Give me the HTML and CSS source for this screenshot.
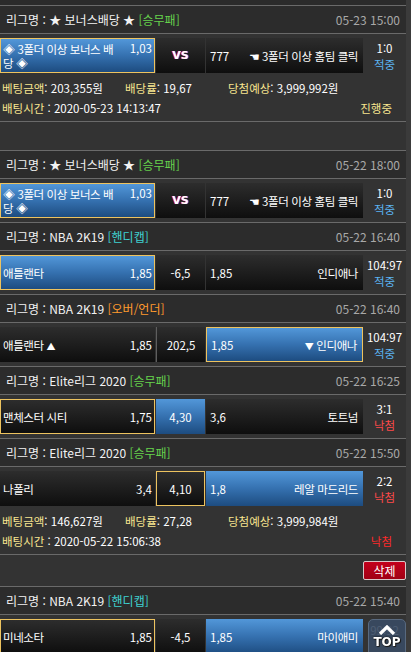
FILE: index.html
```html
<!DOCTYPE html>
<html lang="ko">
<head>
<meta charset="utf-8">
<title>베팅내역</title>
<link rel="stylesheet" href="styles.css">
</head>
<body>
<div class="page">
  <div class="cap"></div>

  <section class="ticket">
    <div class="league">
      <span class="lg">리그명 : ★ 보너스배당 ★ <span class="tp green">[승무패]</span></span>
      <span class="date">05-23 15:00</span>
    </div>
    <div class="match">
      <div class="box home blue sel bonus"><span class="nm">◈ 3폴더 이상 보너스 배당 ◈</span><span class="od">1,03</span></div>
      <div class="box mid dark"><span class="vs">VS</span></div>
      <div class="box away dark"><span class="od">777</span><span class="nm"><span class="hand">☚</span> 3폴더 이상 홈팀 클릭</span></div>
      <div class="res"><span>1:0</span><span class="hit">적중</span></div>
    </div>
    <div class="info">
      <div class="c1"><span class="lb">베팅금액</span>: 203,355원</div>
      <div class="c2"><span class="lb">배당률</span>: 19,67</div>
      <div class="c3"><span class="lb">당첨예상</span>: 3,999,992원</div>
      <div class="row2"><span><span class="lb">배팅시간</span> : 2020-05-23 14:13:47</span><span class="st ing">진행중</span></div>
    </div>
    <div class="actions"></div>
  </section>

  <section class="ticket">
    <div class="league">
      <span class="lg">리그명 : ★ 보너스배당 ★ <span class="tp green">[승무패]</span></span>
      <span class="date">05-22 18:00</span>
    </div>
    <div class="match">
      <div class="box home blue sel bonus"><span class="nm">◈ 3폴더 이상 보너스 배당 ◈</span><span class="od">1,03</span></div>
      <div class="box mid dark"><span class="vs">VS</span></div>
      <div class="box away dark"><span class="od">777</span><span class="nm"><span class="hand">☚</span> 3폴더 이상 홈팀 클릭</span></div>
      <div class="res"><span>1:0</span><span class="hit">적중</span></div>
    </div>

    <div class="league">
      <span class="lg">리그명 : NBA 2K19 <span class="tp cyan">[핸디캡]</span></span>
      <span class="date">05-22 16:40</span>
    </div>
    <div class="match">
      <div class="box home blue sel"><span class="nm">애틀랜타</span><span class="od">1,85</span></div>
      <div class="box mid dark">-6,5</div>
      <div class="box away dark"><span class="od">1,85</span><span class="nm">인디애나</span></div>
      <div class="res"><span>104:97</span><span class="hit">적중</span></div>
    </div>

    <div class="league">
      <span class="lg">리그명 : NBA 2K19 <span class="tp orange">[오버/언더]</span></span>
      <span class="date">05-22 16:40</span>
    </div>
    <div class="match">
      <div class="box home dark"><span class="nm">애틀랜타 <span class="tri">▲</span></span><span class="od">1,85</span></div>
      <div class="box mid dark split">202,5</div>
      <div class="box away blue sel"><span class="od">1,85</span><span class="nm"><span class="tri">▼</span> 인디애나</span></div>
      <div class="res"><span>104:97</span><span class="hit">적중</span></div>
    </div>

    <div class="league">
      <span class="lg">리그명 : Elite리그 2020 <span class="tp green">[승무패]</span></span>
      <span class="date">05-22 16:25</span>
    </div>
    <div class="match">
      <div class="box home dark sel"><span class="nm">맨체스터 시티</span><span class="od">1,75</span></div>
      <div class="box mid blue">4,30</div>
      <div class="box away dark"><span class="od">3,6</span><span class="nm">토트넘</span></div>
      <div class="res"><span>3:1</span><span class="miss">낙첨</span></div>
    </div>

    <div class="league">
      <span class="lg">리그명 : Elite리그 2020 <span class="tp green">[승무패]</span></span>
      <span class="date">05-22 15:50</span>
    </div>
    <div class="match">
      <div class="box home dark"><span class="nm">나폴리</span><span class="od">3,4</span></div>
      <div class="box mid dark sel">4,10</div>
      <div class="box away blue"><span class="od">1,8</span><span class="nm">레알 마드리드</span></div>
      <div class="res"><span>2:2</span><span class="miss">낙첨</span></div>
    </div>
    <div class="info">
      <div class="c1"><span class="lb">베팅금액</span>: 146,627원</div>
      <div class="c2"><span class="lb">배당률</span>: 27,28</div>
      <div class="c3"><span class="lb">당첨예상</span>: 3,999,984원</div>
      <div class="row2"><span><span class="lb">배팅시간</span> : 2020-05-22 15:06:38</span><span class="st lost">낙첨</span></div>
    </div>
    <div class="actions"><button class="del" type="button">삭제</button></div>
  </section>

  <section class="ticket">
    <div class="league">
      <span class="lg">리그명 : NBA 2K19 <span class="tp cyan">[핸디캡]</span></span>
      <span class="date">05-22 15:40</span>
    </div>
    <div class="match">
      <div class="box home dark sel"><span class="nm">미네소타</span><span class="od">1,85</span></div>
      <div class="box mid dark">-4,5</div>
      <div class="box away blue"><span class="od">1,85</span><span class="nm">마이애미</span></div>
      <div class="res"><span class="faint">99:92</span></div>
    </div>
  </section>
</div>

<a class="top" href="#">
  <svg width="20" height="10" viewBox="0 0 20 10"><polyline points="3,9 10,2 17,9" fill="none" stroke="#fff" stroke-width="3.2" stroke-linejoin="miter"/></svg>
  <span>TOP</span>
</a>
</body>
</html>
```

FILE: styles.css
```css
* { box-sizing: border-box; margin: 0; padding: 0; }

html, body {
  width: 411px;
  height: 652px;
  overflow: hidden;
}

body {
  background: #3b3b3b;
  font-family: "Noto Sans CJK KR", "Noto Sans", sans-serif;
  font-size: 12px;
  color: #fff;
}

.page {
  width: 406px;
  background: #333333;
}

.cap {
  height: 5px;
  background: #2b2b2b;
}

.league {
  height: 29px;
  display: flex;
  align-items: center;
  justify-content: space-between;
  padding: 0 6px;
  background: #2c2c2c;
  border-top: 1px solid #6a6a6a;
  border-bottom: 1px solid #6a6a6a;
  line-height: 16px;
}

.lg { color: #f2f2f2; }
.date { color: #a8a8a8; }
.tp.green { color: #66d24c; }
.tp.cyan { color: #3fd0d0; }
.tp.orange { color: #ff9a2e; }

.match {
  height: 43px;
  padding-top: 4px;
  display: flex;
}

.box {
  height: 35px;
  display: flex;
  align-items: center;
  justify-content: space-between;
  padding: 0 3px;
  font-size: 11.5px;
  letter-spacing: -0.4px;
  color: #fff;
  white-space: nowrap;
}

.box .od { font-size: 11.5px; letter-spacing: 0; }
.tri { font-size: 9px; }
.hand { font-family: "DejaVu Sans", sans-serif; font-size: 12px; }

.home { width: 155px; }
.mid { width: 49px; margin-left: 1px; justify-content: center; letter-spacing: 0; }
.mid.split { border-left: 1px solid #5e5e5e; }
.away { width: 157px; margin-left: 1px; padding-right: 5px; padding-left: 4px; }

.dark { background: linear-gradient(#2d2d2d, #1c1c1c 55%, #0e0e0e); }
.blue { background: linear-gradient(#5297d9, #3571b0 50%, #1d4c80); }
.sel { border: 1px solid #edc35f; }
.home.sel { padding-left: 2px; padding-right: 2px; }

.bonus { line-height: 14px; }
.bonus .nm {
  white-space: normal;
  word-break: break-all;
  width: 118px;
}
.bonus .od { align-self: flex-start; margin-top: 2px; }

.vs {
  font-size: 11px;
  font-weight: bold;
  font-family: "DejaVu Sans", sans-serif;
  color: #fff;
  text-shadow: -1px 0 #e0202a, 1px 0 #2a3fd8;
}

.res {
  width: 43px;
  height: 35px;
  display: flex;
  flex-direction: column;
  align-items: center;
  justify-content: center;
  line-height: 16px;
  font-size: 11.5px;
}
.hit { color: #5cb4f2; }
.miss { color: #ff4a4a; }
.faint { color: #bbb; margin-top: -14px; }

.info {
  height: 44px;
  padding: 4px 0 0 2px;
  display: grid;
  grid-template-columns: 123px 103px 1fr;
  line-height: 15px;
  font-size: 11.5px;
}
.lb { color: #f8e58f; }
.row2 {
  grid-column: 1 / 4;
  display: flex;
  justify-content: space-between;
  padding-right: 14px;
}
.st.ing { color: #f8e58f; }
.st.lost { color: #ff2a2a; }

.actions {
  min-height: 29px;
  border-top: 1px solid #6a6a6a;
  padding: 6px 0 6px;
  display: flex;
  justify-content: flex-end;
}

.del {
  width: 43px;
  height: 19px;
  background: linear-gradient(#c4001c, #a00014);
  border: 1px solid #d9c7c9;
  border-radius: 2px;
  color: #fff;
  font-family: "Noto Sans CJK KR", sans-serif;
  font-size: 12px;
  line-height: 15px;
}

.top {
  position: fixed;
  left: 368px;
  top: 619px;
  width: 38px;
  height: 42px;
  border: 1px solid #58697f;
  border-radius: 5px;
  background: rgba(58, 76, 102, 0.85);
  display: flex;
  flex-direction: column;
  align-items: center;
  padding-top: 5px;
  text-decoration: none;
}
.top svg { display: block; }
.top span {
  font-family: "DejaVu Sans", sans-serif;
  font-weight: bold;
  font-size: 12px;
  line-height: 14px;
  color: #fff;
  text-shadow: 0 0 2px #000, 1px 1px 0 #222;
}
```
